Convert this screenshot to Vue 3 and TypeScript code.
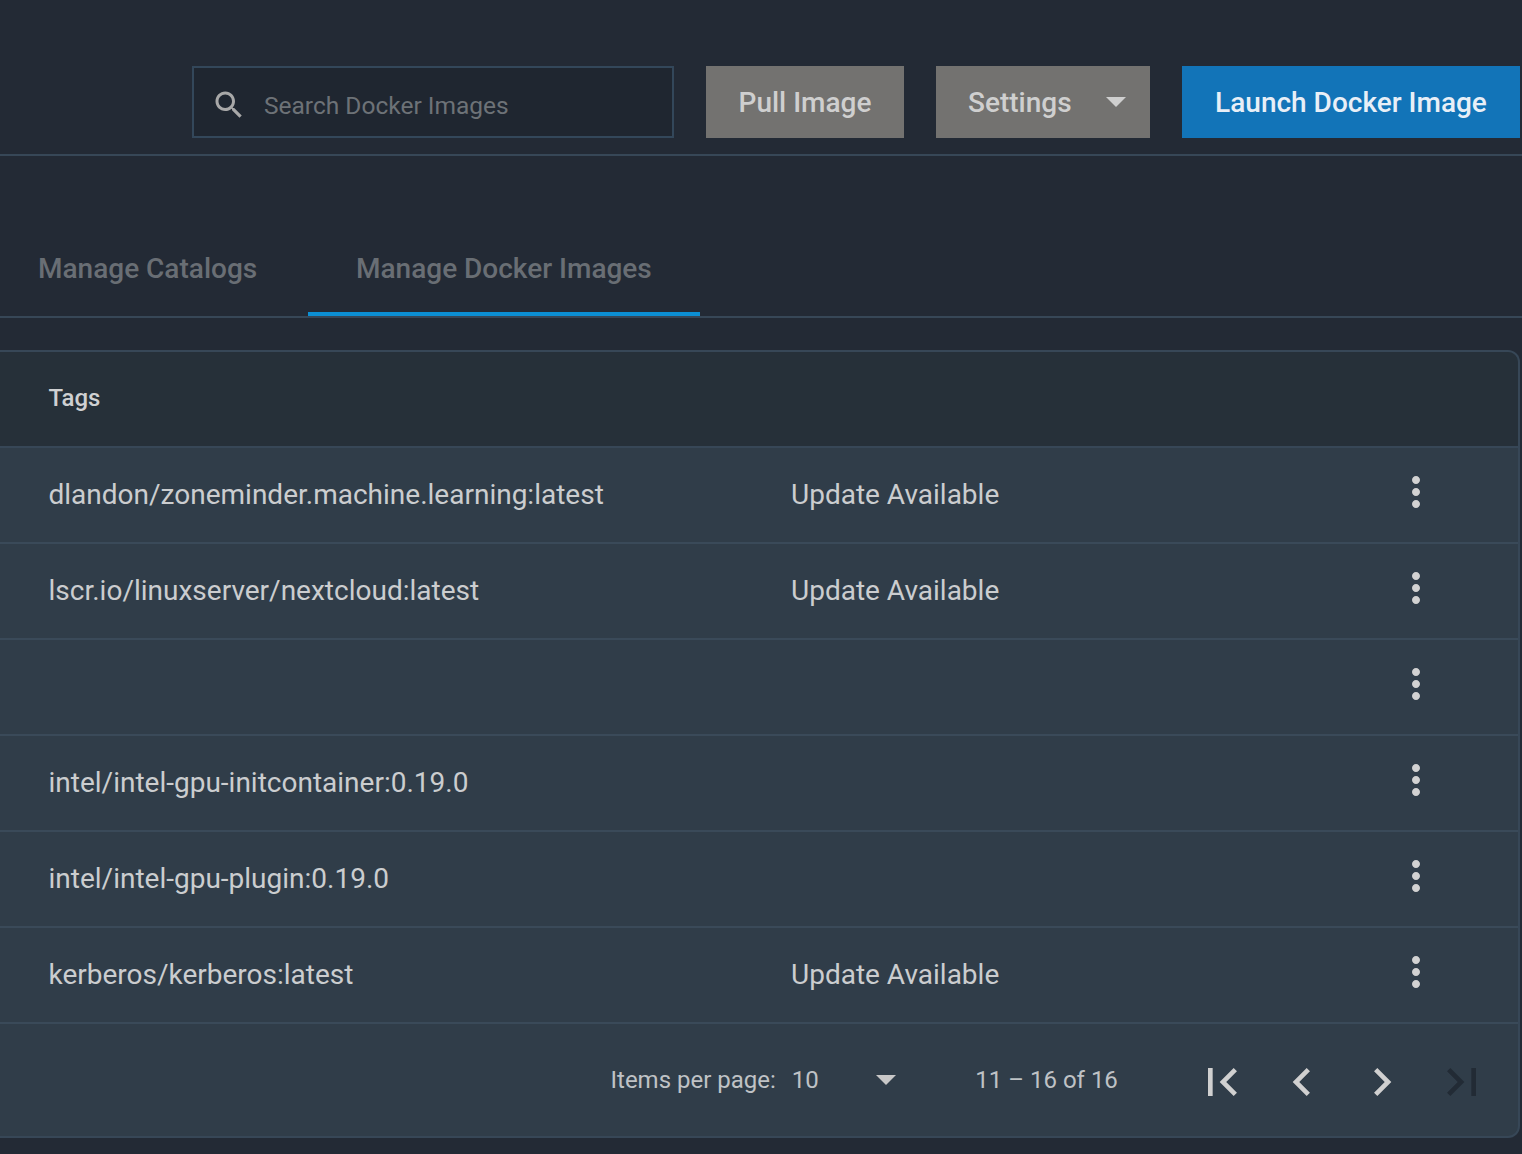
<script setup lang="ts">
// Rows of the docker images table
const rows = [
  { tag: 'dlandon/zoneminder.machine.learning:latest', status: 'Update Available' },
  { tag: 'lscr.io/linuxserver/nextcloud:latest', status: 'Update Available' },
  { tag: '', status: '' },
  { tag: 'intel/intel-gpu-initcontainer:0.19.0', status: '' },
  { tag: 'intel/intel-gpu-plugin:0.19.0', status: '' },
  { tag: 'kerberos/kerberos:latest', status: 'Update Available' }
];

const pageIcons = [
  { path: 'M18.41 16.59L13.82 12l4.59-4.59L17 6l-6 6 6 6zM6 6h2v12H6z', off: false },
  { path: 'M15.41 7.41L14 6l-6 6 6 6 1.41-1.41L10.83 12z', off: false },
  { path: 'M10 6L8.59 7.41 13.17 12l-4.58 4.59L10 18l6-6z', off: false },
  { path: 'M5.59 7.41L10.18 12l-4.59 4.59L7 18l6-6-6-6zM16 6h2v12h-2z', off: true }
];
</script>

<template>
  <div class="page">
    <div class="toolbar">
      <div class="search">
        <svg class="search-icon" viewBox="0 0 24 24">
          <path d="M15.5 14h-.79l-.28-.27C15.41 12.59 16 11.11 16 9.5 16 5.91 13.09 3 9.5 3S3 5.91 3 9.5 5.91 16 9.5 16c1.61 0 3.09-.59 4.23-1.57l.27.28v.79l5 4.99L20.49 19l-4.99-5zm-6 0C7.01 14 5 11.99 5 9.5S7.01 5 9.5 5 14 7.01 14 9.5 11.99 14 9.5 14z" />
        </svg>
        <span class="placeholder">Search Docker Images</span>
      </div>
      <button class="btn grey pull">Pull Image</button>
      <button class="btn grey settings">
        <span>Settings</span>
        <i class="caret"></i>
      </button>
      <button class="btn blue">Launch Docker Image</button>
    </div>

    <div class="tabs">
      <div class="tab">Manage Catalogs</div>
      <div class="tab active">Manage Docker Images</div>
    </div>

    <div class="card">
      <div class="head">Tags</div>
      <div v-for="(row, index) in rows" :key="index" class="row">
        <div class="tag">{{ row.tag }}</div>
        <div class="status">{{ row.status }}</div>
        <svg class="more" viewBox="0 0 24 24">
          <path d="M12 8c1.1 0 2-.9 2-2s-.9-2-2-2-2 .9-2 2 .9 2 2 2zm0 2c-1.1 0-2 .9-2 2s.9 2 2 2 2-.9 2-2-.9-2-2-2zm0 6c-1.1 0-2 .9-2 2s.9 2 2 2 2-.9 2-2-.9-2-2-2z" />
        </svg>
      </div>
      <div class="footer">
        <span class="per-page">Items per page:</span>
        <div class="select">
          <span>10</span>
          <i class="caret small"></i>
        </div>
        <span class="range">11 – 16 of 16</span>
        <div class="pager">
          <button v-for="icon in pageIcons" :key="icon.path" class="page-btn" :class="{ off: icon.off }">
            <svg viewBox="0 0 24 24"><path :d="icon.path" /></svg>
          </button>
        </div>
      </div>
    </div>
  </div>
</template>

<style scoped>
.page {
  width: 1522px;
  height: 1154px;
  overflow: hidden;
  background: #232a35;
  font-family: Roboto, sans-serif;
  box-sizing: border-box;
}

.toolbar {
  height: 88px;
  padding: 66px 2px 0 0;
  box-sizing: content-box;
  display: flex;
  justify-content: flex-end;
  align-items: flex-start;
  gap: 32px;
  border-bottom: 2px solid #374757;
}

.search {
  width: 482px;
  height: 72px;
  box-sizing: border-box;
  border: 2px solid #33475a;
  background: #1f2630;
  display: flex;
  align-items: center;
  padding: 6px 0 0 17px;
}

.search-icon {
  width: 36px;
  height: 36px;
  fill: #a8a8a8;
}

.placeholder {
  margin-left: 17px;
  font-size: 24.5px;
  color: #6d7277;
}

.btn {
  height: 72px;
  border: none;
  font-family: Roboto, sans-serif;
  font-size: 28px;
  font-weight: 500;
  padding: 0;
}

.grey {
  background: #737270;
  color: #cfcfcf;
}

.pull {
  width: 198px;
}

.settings {
  width: 214px;
  display: flex;
  align-items: center;
  padding-left: 32px;
}

.settings .caret {
  margin-left: 34px;
}

.blue {
  width: 338px;
  background: #1274b8;
  color: #e8eff7;
}

.caret {
  width: 0;
  height: 0;
  border-left: 10px solid transparent;
  border-right: 10px solid transparent;
  border-top: 10px solid #cfcfcf;
}

.tabs {
  height: 160px;
  display: flex;
  align-items: flex-end;
  margin-left: -10px;
  border-bottom: 2px solid #374757;
  width: 1532px;
}

.tab {
  height: 96px;
  padding: 0 0 0 48px;
  display: flex;
  align-items: center;
  font-size: 28px;
  font-weight: 500;
  color: #696e74;
  box-sizing: border-box;
}

.tab:first-child {
  width: 318px;
}

.tab.active {
  width: 392px;
  padding-top: 4px;
  border-bottom: 4px solid #0c8fd4;
}

.card {
  margin-top: 32px;
  width: 1520px;
  box-sizing: border-box;
  border: 2px solid #374757;
  border-left: none;
  border-radius: 0 12px 12px 0;
  background: #303d49;
  overflow: hidden;
}

.head {
  height: 96px;
  padding: 0 0 2px 48.5px;
  display: flex;
  align-items: center;
  font-size: 24px;
  font-weight: 500;
  color: #cfd0d2;
  background: #263039;
  border-bottom: 2px solid #374757;
  box-sizing: border-box;
}

.row {
  height: 96px;
  box-sizing: border-box;
  border-bottom: 2px solid #3a4a59;
  display: flex;
  align-items: center;
  padding: 0 0 2px 48.5px;
  font-size: 28px;
  color: #cbcdcf;
}

.tag {
  width: 742.5px;
}

.status {
  width: 600.5px;
}

.more {
  width: 48px;
  height: 48px;
  fill: #d2d2d2;
  position: relative;
  top: -2px;
}

.footer {
  height: 112px;
  display: flex;
  align-items: center;
  padding-left: 610.5px;
  font-size: 24px;
  color: #bfc2c5;
}

.select {
  width: 104.5px;
  margin-left: 16px;
  display: flex;
  align-items: center;
  justify-content: space-between;
}

.caret.small {
  border-top-color: #c8c8c8;
}

.range {
  margin-left: 79px;
}

.pager {
  margin: 4px 0 0 64px;
  display: flex;
}

.page-btn {
  width: 80px;
  height: 80px;
  border: none;
  background: none;
  padding: 12px;
  fill: #d0d0d0;
}

.page-btn svg {
  display: block;
  width: 56px;
  height: 56px;
}

.page-btn.off {
  fill: #222b35;
}
</style>

<style>
body {
  background: #232a35;
}
</style>
